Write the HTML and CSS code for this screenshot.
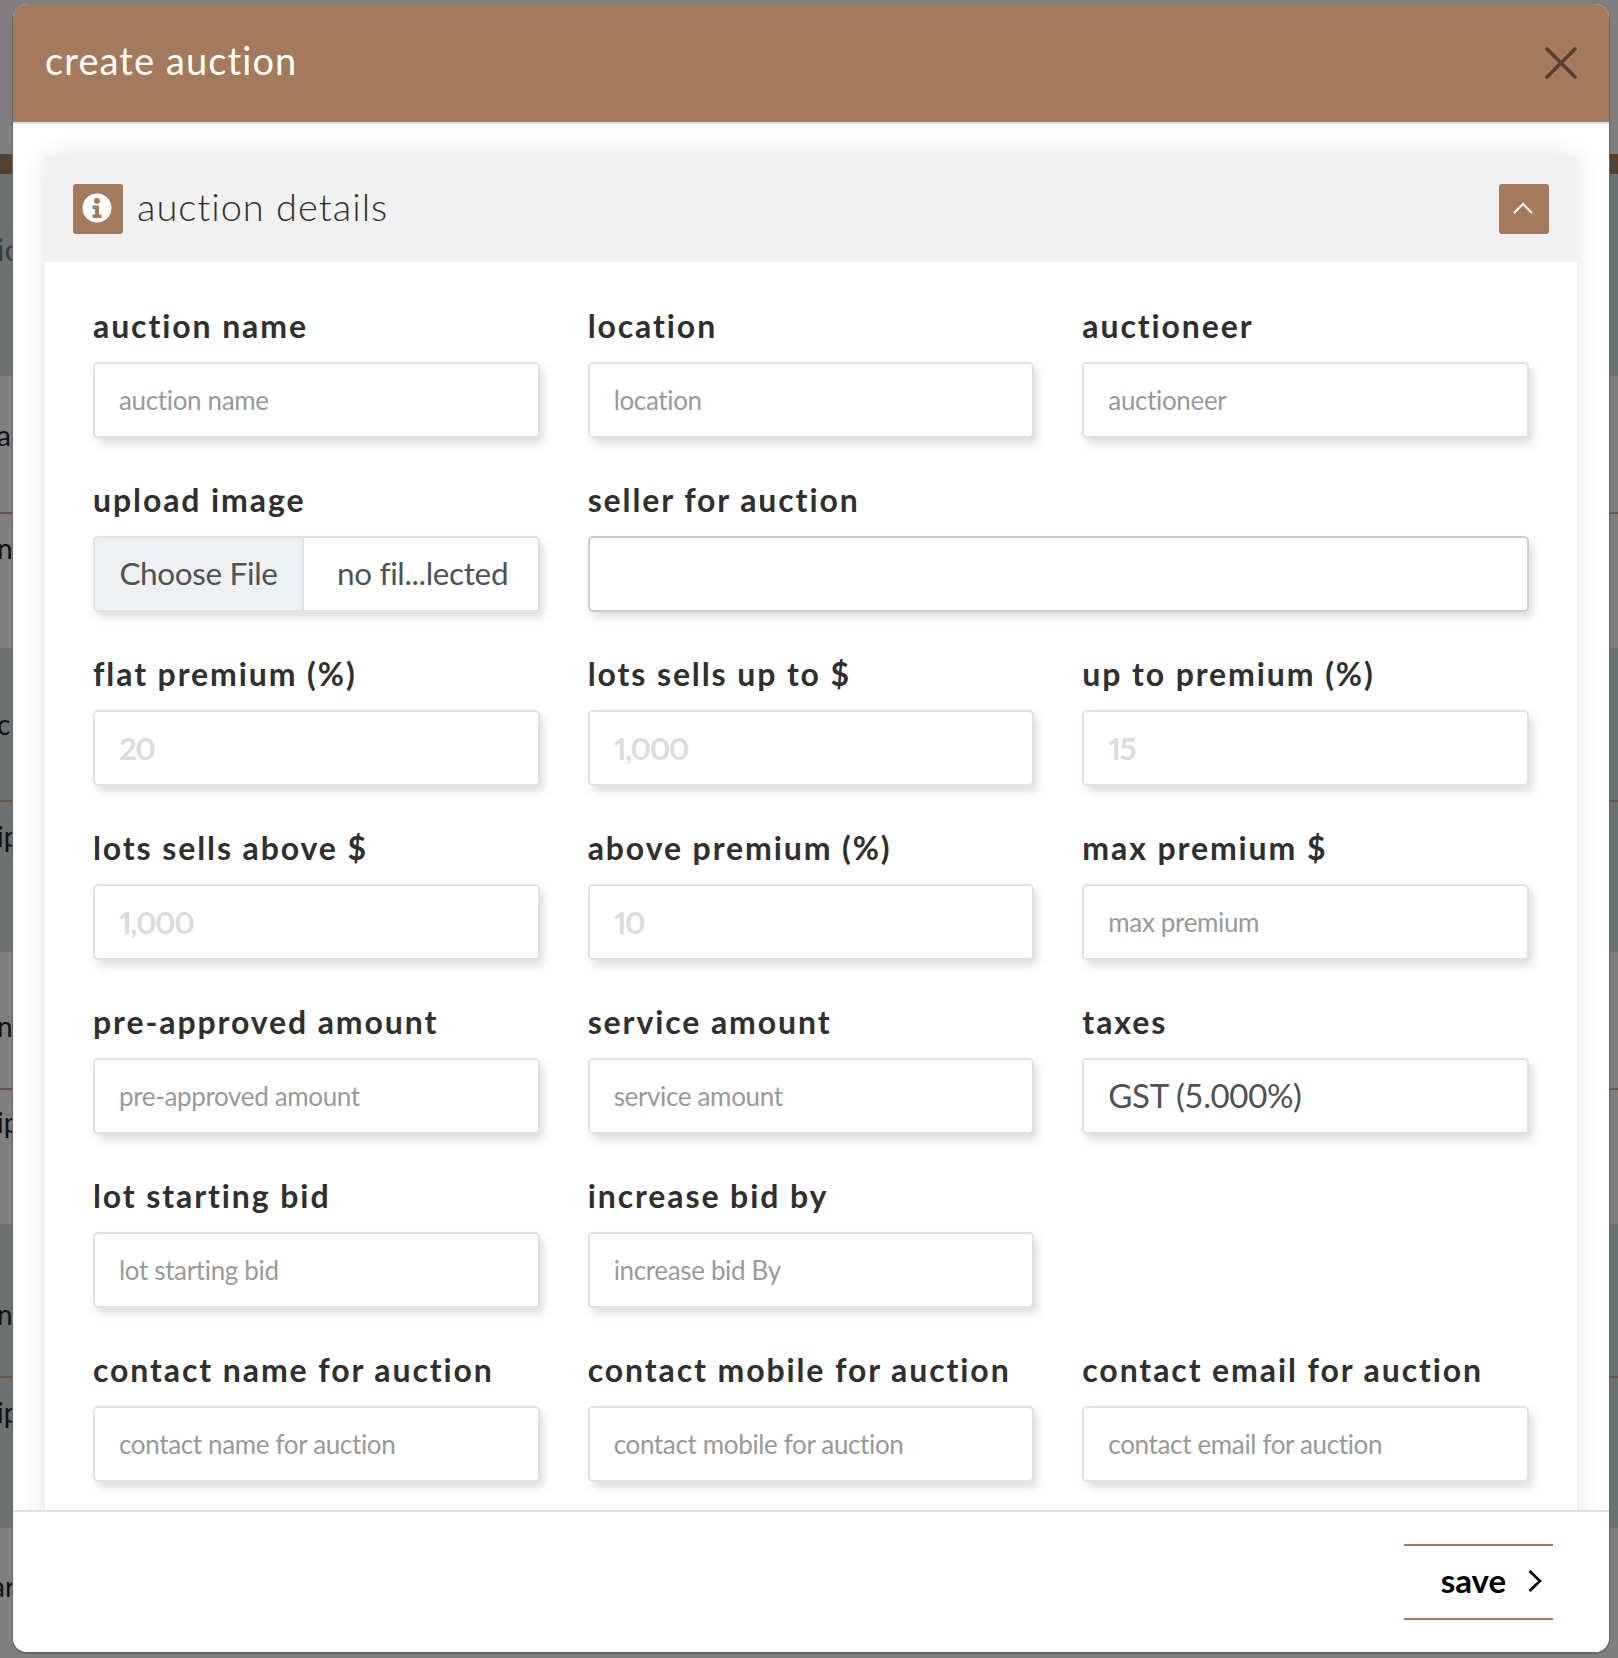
FILE: index.html
```html
<!DOCTYPE html>
<html lang="en">
<head>
    <meta charset="UTF-8">
    <meta name="viewport" content="width=device-width, initial-scale=1.0">
    <title>create auction</title>
    <link rel="stylesheet" href="styles.css">
</head>
<body>
    <!-- page behind the modal, only the edges show -->
    <div class="backdrop">
        <div class="bg-row h-154"></div>
        <div class="bg-row band-brown"></div>
        <div class="bg-row dark h-202 pad-59 dim">ic</div>
        <div class="bg-row h-138 pad-43 line">a</div>
        <div class="bg-row h-134 pad-18">n</div>
        <div class="bg-row dark h-154 pad-60 line">c</div>
        <div class="bg-row dark h-150 pad-18">ip</div>
        <div class="bg-row h-138 pad-58 line">n</div>
        <div class="bg-row h-134 pad-16">ip</div>
        <div class="bg-row dark h-154 pad-74 line">n</div>
        <div class="bg-row dark h-150 pad-18">ip</div>
        <div class="bg-row h-130 pad-42 far">ar</div>
    </div>
    <div class="modal">
        <header class="modal-head">
            <h1>create auction</h1>
            <button class="close-btn" aria-label="close">
                <svg width="32" height="32" viewBox="0 0 32 32"><path d="M2 2 L30 30 M30 2 L2 30" stroke="#54402f" stroke-width="3.4" stroke-linecap="round" fill="none"/></svg>
            </button>
        </header>
        <div class="modal-body">
            <section class="card">
                <div class="card-head">
                    <span class="icon-box">
                        <svg width="30" height="30" viewBox="0 0 30 30"><circle cx="15" cy="15" r="14.5" fill="#fff"/><circle cx="15" cy="8" r="3" fill="#a37a5c"/><path d="M10.5 12.5h6.5v9h2.5v3.5h-9v-3.5h2.5v-5.500h-2.500z" fill="#a37a5c"/></svg>
                    </span>
                    <h2>auction details</h2>
                    <button class="toggle-btn" aria-label="collapse">
                        <svg width="20" height="12" viewBox="0 0 20 12"><path d="M1 11 L10 2 L19 11" stroke="#fff" stroke-width="2" fill="none"/></svg>
                    </button>
                </div>
                <div class="card-body">
                    <div class="field"><label>auction name</label><input class="ctl" placeholder="auction name"></div>
                    <div class="field"><label>location</label><input class="ctl" placeholder="location"></div>
                    <div class="field"><label>auctioneer</label><input class="ctl" placeholder="auctioneer"></div>

                    <div class="field"><label>upload image</label>
                        <div class="ctl file-ctl"><span class="file-btn">Choose File</span><span class="file-name">no fil...lected</span></div>
                    </div>
                    <div class="field wide"><label>seller for auction</label><input class="ctl seller"></div>

                    <div class="field"><label>flat premium (%)</label><input class="ctl big" placeholder="20"></div>
                    <div class="field"><label>lots sells up to $</label><input class="ctl big" placeholder="1,000"></div>
                    <div class="field"><label>up to premium (%)</label><input class="ctl big" placeholder="15"></div>

                    <div class="field"><label>lots sells above $</label><input class="ctl big" placeholder="1,000"></div>
                    <div class="field"><label>above premium (%)</label><input class="ctl big" placeholder="10"></div>
                    <div class="field"><label>max premium $</label><input class="ctl" placeholder="max premium"></div>

                    <div class="field"><label>pre-approved amount</label><input class="ctl" placeholder="pre-approved amount"></div>
                    <div class="field"><label>service amount</label><input class="ctl" placeholder="service amount"></div>
                    <div class="field"><label>taxes</label><div class="ctl select-ctl">GST (5.000%)</div></div>

                    <div class="field"><label>lot starting bid</label><input class="ctl" placeholder="lot starting bid"></div>
                    <div class="field"><label>increase bid by</label><input class="ctl" placeholder="increase bid By"></div>
                    <div class="field"></div>

                    <div class="field"><label>contact name for auction</label><input class="ctl" placeholder="contact name for auction"></div>
                    <div class="field"><label>contact mobile for auction</label><input class="ctl" placeholder="contact mobile for auction"></div>
                    <div class="field"><label>contact email for auction</label><input class="ctl" placeholder="contact email for auction"></div>
                </div>
            </section>
        </div>
        <footer class="modal-foot">
            <button class="save-btn">save
                <svg class="save-arrow" width="14" height="24" viewBox="0 0 14 24"><path d="M1.500 2 L12 12 L1.500 22" stroke="#000" stroke-width="2.600" fill="none"/></svg>
            </button>
        </footer>
    </div>
</body>
</html>
```

FILE: styles.css
```css
* {
    box-sizing: border-box;
}
html, body {
    margin: 0;
    height: 100%;
}
body {
    position: relative;
    height: 1658px;
    overflow: hidden;
    background-color: #7f7f7f;
    font-family: 'Lato', 'Noto Sans', sans-serif;
    color: #2f2f2f;
}
.backdrop {
    display: flex;
    flex-direction: column;
    font-size: 28px;
    line-height: 32px;
    color: #111;
}
.bg-row {
    flex: none;
    text-indent: -3px;
    background-color: #7f7f7f;
}
.bg-row.dark {
    background-color: #6c7272;
}
.bg-row.dim {
    font-size: 31px;
    color: #3c3f3f;
}
.bg-row.far {
    text-indent: -9px;
}
.bg-row.line {
    border-bottom: 2px solid #6b5443;
}
.band-brown {
    height: 20px;
    background-color: #544132;
}
.h-130 { height: 130px; }
.h-134 { height: 134px; }
.h-138 { height: 138px; }
.h-150 { height: 150px; }
.h-154 { height: 154px; }
.h-202 { height: 202px; }
.pad-16 { padding-top: 16px; }
.pad-18 { padding-top: 18px; }
.pad-42 { padding-top: 42px; }
.pad-43 { padding-top: 43px; }
.pad-58 { padding-top: 58px; }
.pad-59 { padding-top: 59px; }
.pad-60 { padding-top: 60px; }
.pad-74 { padding-top: 74px; }
.modal {
    position: absolute;
    left: 13px;
    top: 4px;
    width: 1596px;
    height: 1648px;
    display: flex;
    flex-direction: column;
    background-color: #fff;
    border-radius: 14px;
    overflow: hidden;
    box-shadow: 0 1px 0 1px #666;
}
.modal-head {
    height: 120px;
    flex: none;
    display: flex;
    align-items: center;
    justify-content: space-between;
    padding: 0 32px;
    background-color: #a37a5c;
    border-bottom: 2px solid #dee2e6;
}
.modal-head h1 {
    margin: 0 0 6px;
    font-size: 38px;
    font-weight: 400;
    letter-spacing: 1.1px;
    color: #fff;
}
.close-btn {
    width: 32px;
    height: 32px;
    padding: 0;
    border: none;
    background: none;
}
.modal-body {
    flex: 1;
    min-height: 0;
    overflow: hidden;
    padding: 32px 32px 0;
}
.card {
    box-shadow: 0 0 24px rgba(0,0,0,0.12);
}
.card-head {
    height: 106px;
    display: flex;
    align-items: center;
    padding: 0 28px;
    background-color: #f1f1f1;
}
.icon-box {
    width: 50px;
    height: 50px;
    display: flex;
    align-items: center;
    justify-content: center;
    padding-right: 3px;
    padding-bottom: 2px;
    background-color: #a37a5c;
    border-radius: 3px;
}
.card-head h2 {
    flex: 1;
    margin: 0 0 6px 14px;
    font-size: 38px;
    font-weight: 300;
    letter-spacing: 1px;
}
.toggle-btn {
    width: 50px;
    height: 50px;
    padding: 0 2px 0 0;
    border: none;
    border-radius: 3px;
    background-color: #a37a5c;
}
.card-body {
    display: grid;
    grid-template-columns: repeat(3, 1fr);
    column-gap: 48px;
    padding: 47px 48px 0;
    background-color: #fff;
}
.field {
    height: 174px;
}
.field.wide {
    grid-column: span 2;
}
.field label {
    display: block;
    height: 33px;
    line-height: 33px;
    margin-bottom: 20px;
    font-size: 32px;
    font-weight: 700;
    letter-spacing: 1.9px;
    color: #2f2f2f;
    white-space: nowrap;
}
.ctl {
    display: block;
    width: 100%;
    height: 76px;
    padding: 0 24px;
    font-family: inherit;
    font-size: 26px;
    letter-spacing: -0.35px;
    color: #4f5155;
    background-color: #fff;
    border: 2px solid #dee2e6;
    border-radius: 5px;
    box-shadow: 4px 6px 8px rgba(120,130,140,0.25);
    outline: none;
}
.ctl::placeholder {
    color: #999;
    opacity: 1;
}
.ctl.big {
    font-size: 31px;
    letter-spacing: -1.5px;
    font-variant-numeric: proportional-nums;
}
.ctl.big::placeholder {
    color: #dcdcdc;
    font-weight: 700;
}
.ctl.seller {
    border-color: #ccc;
}
.file-ctl {
    display: flex;
    padding: 0;
    overflow: hidden;
    font-size: 31.5px;
}
.file-btn {
    width: 209px;
    display: flex;
    align-items: center;
    justify-content: center;
    padding-bottom: 3px;
    background-color: #eff0f2;
    border-right: 2px solid #dee2e6;
}
.file-name {
    flex: 1;
    display: flex;
    align-items: center;
    padding: 0 0 3px 33px;
}
.select-ctl {
    display: flex;
    align-items: center;
    padding-bottom: 3px;
    font-size: 33px;
}
.modal-foot {
    height: 142px;
    flex: none;
    display: flex;
    align-items: center;
    justify-content: flex-end;
    padding-right: 56px;
    background-color: #fff;
    border-top: 2px solid #dee2e6;
}
.save-btn {
    width: 149px;
    height: 76px;
    display: flex;
    align-items: center;
    justify-content: flex-end;
    gap: 22px;
    padding: 0 11px 4px 0;
    font-family: inherit;
    font-size: 33px;
    font-weight: 700;
    color: #000;
    background: none;
    border: none;
    border-top: 2px solid #a37a5c;
    border-bottom: 2px solid #a37a5c;
}
.save-arrow {
    margin-top: 2px;
}
```
